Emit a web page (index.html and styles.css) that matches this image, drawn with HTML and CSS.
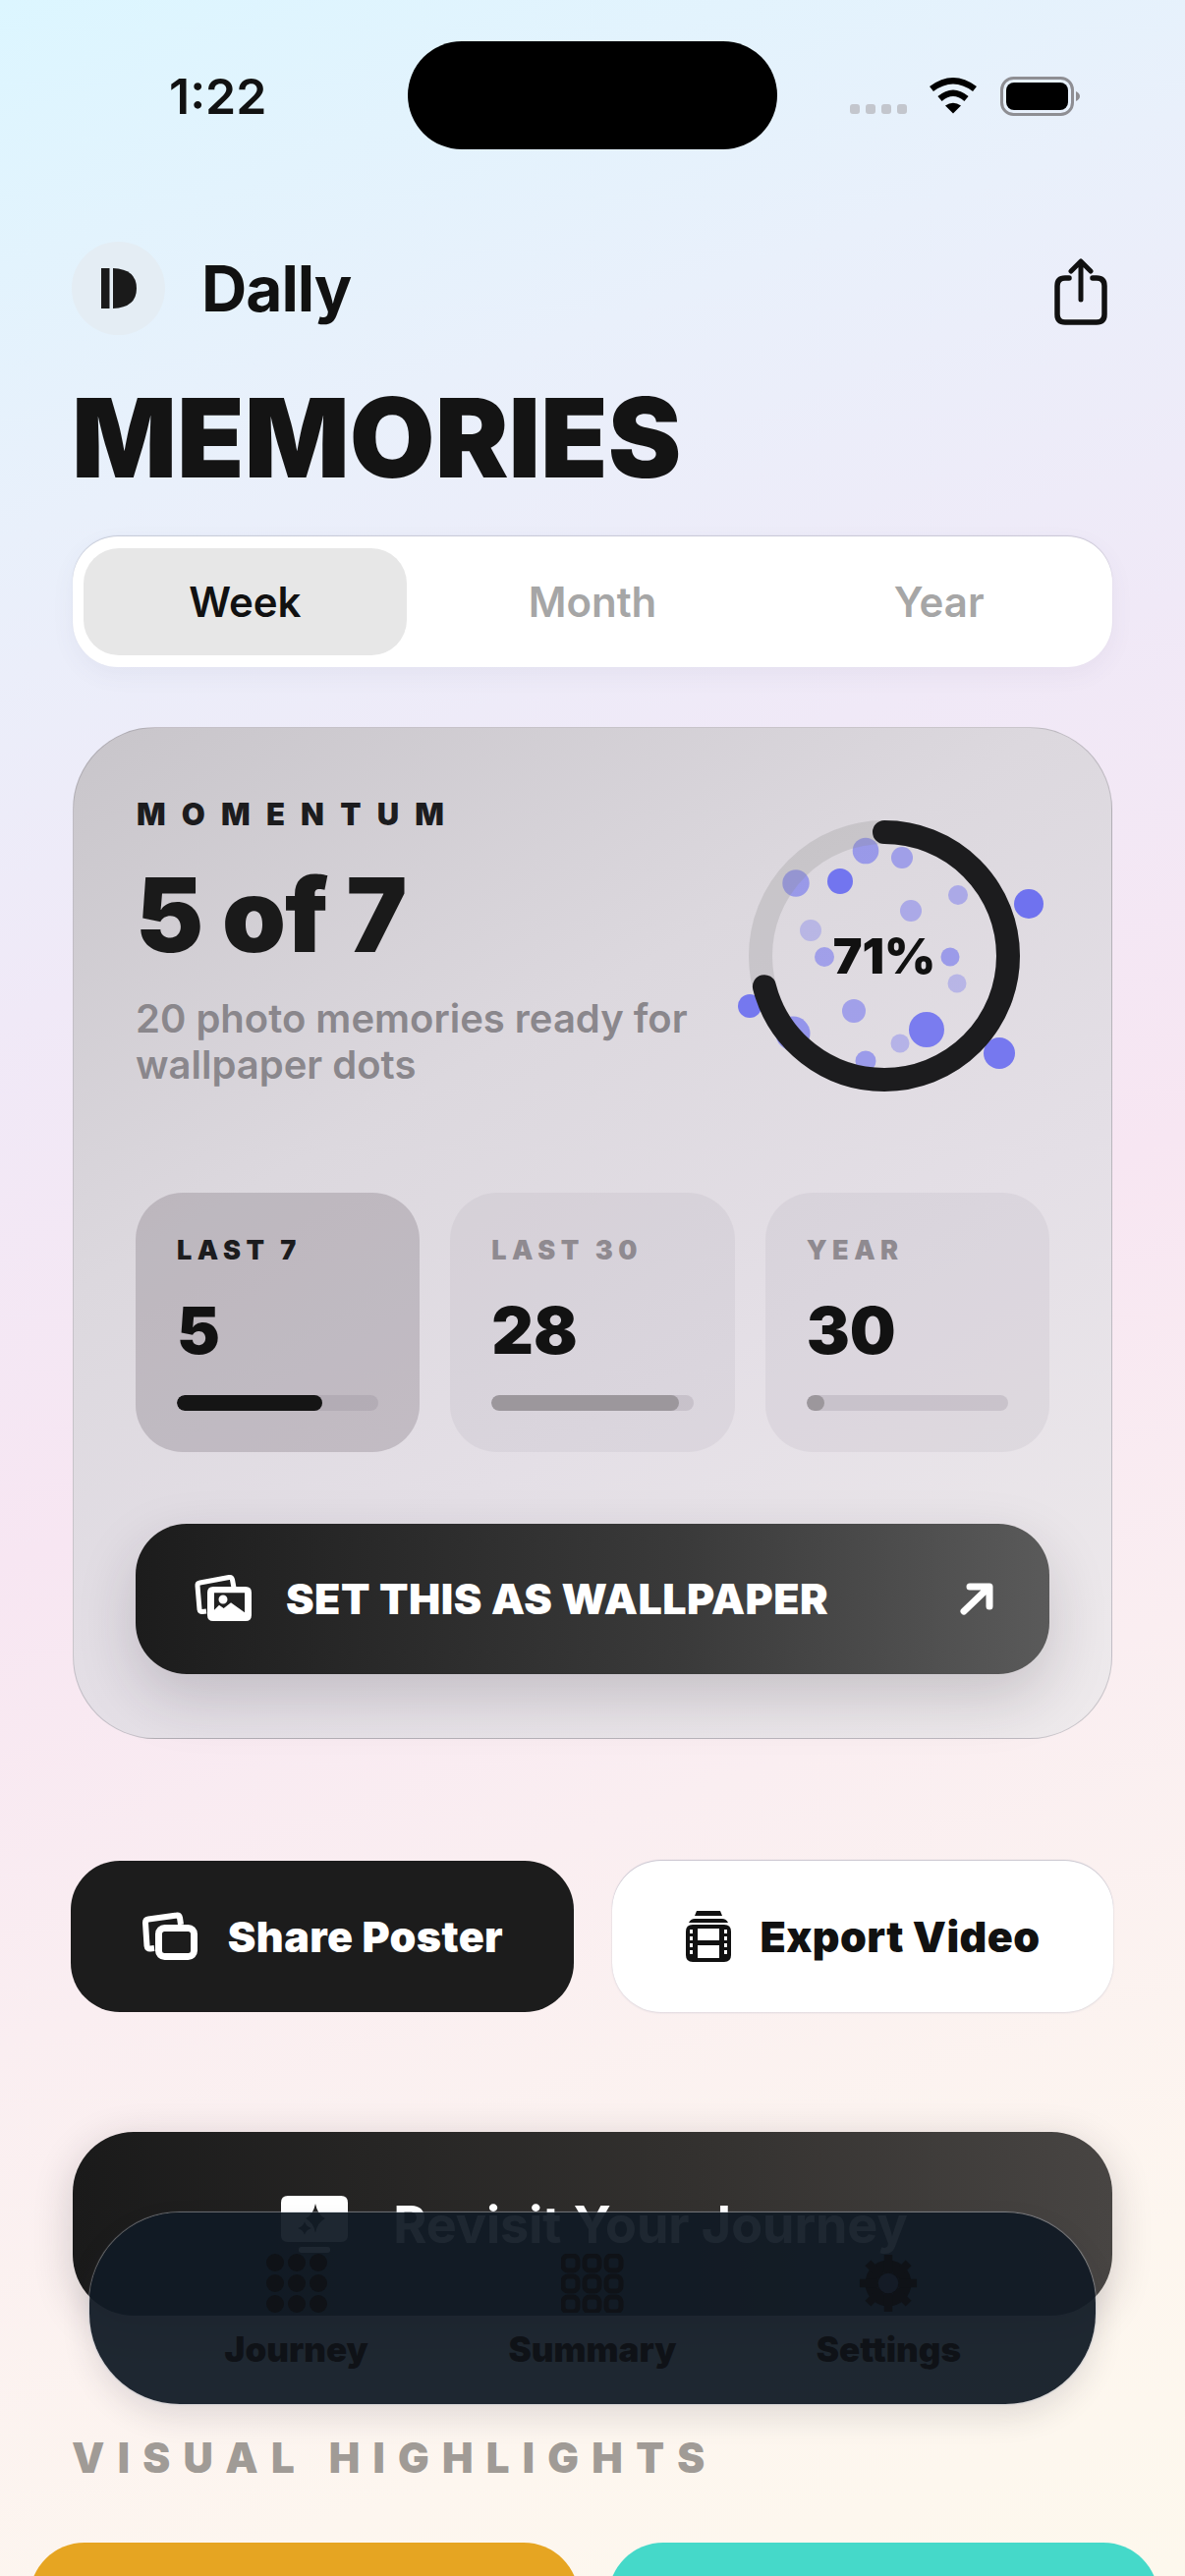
FILE: index.html
```html
<!DOCTYPE html>
<html lang="en">
<head>
  <meta charset="UTF-8" />
  <meta name="viewport" content="width=device-width, initial-scale=1.0" />
  <title>Dally Memories</title>
  <link rel="stylesheet" href="styles.css">
</head>
<body>
  <div id="screen">
    <div class="status">
      <span class="time">1:22</span>
      <div class="island"></div>
      <div class="status-icons">
        <div class="signal"><i></i><i></i><i></i><i></i></div>
        <svg class="wifi" viewBox="0 0 50 38">
          <path d="M3 12.5Q25 -4 47 12.5" fill="none" stroke="#000" stroke-width="6.5"/>
          <path d="M11.5 22.5Q25 11 38.500 22.500" fill="none" stroke="#000" stroke-width="6.500"/>
          <path d="M25 37.500L17 29.500Q25 24 33 29.500Z"/>
        </svg>
        <svg class="battery" viewBox="0 0 82 40">
          <rect x="1.500" y="1.500" width="72" height="37" rx="12" fill="none" stroke="#8e8e93" stroke-width="3"/>
          <rect x="6" y="6" width="63" height="28" rx="8"/>
          <path d="M77 15Q81 17 81 20Q81 23 77 25Z" fill="#8e8e93"/>
        </svg>
      </div>
    </div>

    <div class="brand-row">
      <div class="brand">
        <div class="logo">
          <svg viewBox="0 0 36 41" width="36" height="41">
            <rect x="0" y="0" width="8.500" height="41" fill="#1a1a1a"/>
            <path d="M12 0Q36 1 36 20.500Q36 40 12 41Z" fill="#1a1a1a"/>
          </svg>
        </div>
        <span class="brand-name">Dally</span>
      </div>
      <svg class="share" viewBox="0 0 54 68" width="54" height="68">
        <path d="M15 20H11Q3 20 3 28V57Q3 65 11 65H43Q51 65 51 57V28Q51 20 43 20H39" fill="none" stroke="#111" stroke-width="5.500" stroke-linecap="round"/>
        <path d="M27 42V4M17 13L27 3L37 13" fill="none" stroke="#111" stroke-width="5" stroke-linecap="round" stroke-linejoin="round"/>
      </svg>
    </div>

    <h1 class="title">MEMORIES</h1>

    <div class="segments">
      <div class="seg active">Week</div>
      <div class="seg">Month</div>
      <div class="seg">Year</div>
    </div>

    <div class="card">
      <div class="card-top">
        <div class="momentum">
          <div class="eyebrow">MOMENTUM</div>
          <div class="count">5 of 7</div>
          <p class="blurb">20 photo memories ready for wallpaper dots</p>
        </div>
        <div class="ring-wrap">
          <svg class="ring" viewBox="0 0 320 320" width="320" height="320">
            <g fill="#6366f1">
              <circle cx="141" cy="53" r="13.300" opacity=".55"/>
              <circle cx="178" cy="60" r="11" opacity=".5"/>
              <circle cx="70" cy="86" r="13.700" opacity=".55"/>
              <circle cx="115" cy="84" r="13" opacity=".88"/>
              <circle cx="307" cy="107" r="15" opacity=".9"/>
              <circle cx="235" cy="98" r="10" opacity=".42"/>
              <circle cx="187" cy="114" r="11" opacity=".42"/>
              <circle cx="85" cy="134" r="11" opacity=".3"/>
              <circle cx="99" cy="161" r="10" opacity=".5"/>
              <circle cx="227" cy="161" r="9.500" opacity=".55"/>
              <circle cx="234" cy="188" r="9.500" opacity=".32"/>
              <circle cx="23" cy="211" r="12" opacity=".85"/>
              <circle cx="129" cy="216" r="12" opacity=".5"/>
              <circle cx="67" cy="239" r="17.500" opacity=".6"/>
              <circle cx="203" cy="235" r="18" opacity=".82"/>
              <circle cx="176" cy="249" r="9.500" opacity=".35"/>
              <circle cx="141" cy="267" r="10.500" opacity=".55"/>
              <circle cx="277" cy="259" r="16" opacity=".85"/>
            </g>
            <circle cx="160" cy="160" r="126" fill="none" stroke="#8a8a8a" stroke-opacity=".25" stroke-width="24"/>
            <circle cx="160" cy="160" r="126" fill="none" stroke="#1c1c1e" stroke-width="24" stroke-linecap="round" stroke-dasharray="562 792" transform="rotate(-90 160 160)"/>
          </svg>
          <span class="ring-label">71%</span>
        </div>
      </div>

      <div class="tiles">
        <div class="tile selected">
          <div class="tile-label">LAST 7</div>
          <div class="tile-num">5</div>
          <div class="bar"><div class="bar-fill" style="width:72%"></div></div>
        </div>
        <div class="tile">
          <div class="tile-label">LAST 30</div>
          <div class="tile-num">28</div>
          <div class="bar"><div class="bar-fill" style="width:93%"></div></div>
        </div>
        <div class="tile">
          <div class="tile-label">YEAR</div>
          <div class="tile-num">30</div>
          <div class="bar"><div class="bar-fill" style="width:9%"></div></div>
        </div>
      </div>

      <div class="cta">
        <svg class="cta-icon" viewBox="0 0 60 50" width="60" height="50">
          <path d="M13 38L9 38.500Q6.500 39 6 36L4 12Q3.800 9.500 6.500 9L36 3.500Q39 3 39.500 6L41 14" fill="none" stroke="#fff" stroke-width="5" stroke-linejoin="round"/>
          <path fill-rule="evenodd" fill="#fff" d="M20 13H53Q59 13 59 19V42Q59 48 53 48H20Q14 48 14 42V19Q14 13 20 13ZM21 19.300V36.700L26 31.700L30.700 35L38 29.300L52 39.300V19.300ZM30 21.500A4.500 4.500 0 1 1 30 30.500A4.500 4.500 0 1 1 30 21.500Z"/>
        </svg>
        <span class="cta-text">SET THIS AS WALLPAPER</span>
        <svg class="cta-arrow" viewBox="0 0 34 34" width="34" height="34">
          <path d="M4 30L29 6M10 5H30V25" fill="none" stroke="#fff" stroke-width="7" stroke-linecap="round" stroke-linejoin="round"/>
        </svg>
      </div>
    </div>

    <div class="actions">
      <div class="action dark">
        <svg viewBox="0 0 58 50" width="58" height="50">
          <path d="M13 37L9 37.500Q6 38 5.500 34.500L4 11Q4 8 7 7.500L36 3.500Q38.500 3 39 6L40 13" fill="none" stroke="#fff" stroke-width="6" stroke-linejoin="round"/>
          <rect x="17.500" y="16.500" width="36" height="29" rx="6" fill="#1c1c1c" stroke="#fff" stroke-width="7"/>
        </svg>
        <span>Share Poster</span>
      </div>
      <div class="action light">
        <svg viewBox="0 0 46 52" width="46" height="52">
          <path d="M9 5L11 0H35L37 5Z" fill="#111"/>
          <path d="M3 12Q5 8 9 8H37Q41 8 43 12Z" fill="#111"/>
          <path fill-rule="evenodd" fill="#111" d="M7 14H39Q46 14 46 21V45Q46 52 39 52H7Q0 52 0 45V21Q0 14 7 14ZM12 18V30H34V18ZM12 35V48H34V35ZM4 19V23H7V19ZM4 26V30H7V26ZM4 33V37H7V33ZM4 40V44H7V40ZM39 19V23H42V19ZM39 26V30H42V26ZM39 33V37H42V33ZM39 40V44H42V40Z"/>
        </svg>
        <span>Export Video</span>
      </div>
    </div>

    <div class="revisit">
      <svg viewBox="0 0 68 58" width="68" height="58">
        <path fill-rule="evenodd" fill="#fff" d="M7 0H61Q68 0 68 7V40Q68 47 61 47H7Q0 47 0 40V7Q0 0 7 0ZM35 8Q37 19 45 23Q37 27 35 38Q33 27 25 23Q33 19 35 8ZM24 26Q25 31 31 33Q25 35 24 40Q23 35 17 33Q23 31 24 26Z"/>
        <rect x="18" y="52" width="32" height="6" rx="3" fill="#fff"/>
      </svg>
      <span>Revisit Your Journey</span>
    </div>

    <div class="section-label">VISUAL HIGHLIGHTS</div>

    <div class="highlights">
      <div class="highlight amber"></div>
      <div class="highlight teal"></div>
    </div>

    <nav class="tabbar">
      <div class="tab">
        <svg viewBox="0 0 64 60" width="64" height="60" fill="#0f1217">
          <circle cx="10" cy="9" r="9"/><circle cx="32" cy="9" r="9"/><circle cx="54" cy="9" r="9"/>
          <circle cx="10" cy="30" r="9"/><circle cx="32" cy="30" r="9"/><circle cx="54" cy="30" r="9"/>
          <circle cx="10" cy="51" r="9"/><circle cx="32" cy="51" r="9"/><circle cx="54" cy="51" r="9"/>
        </svg>
        <span>Journey</span>
      </div>
      <div class="tab">
        <svg viewBox="0 0 64 60" width="64" height="60" fill="none" stroke="#0f1217" stroke-width="5">
          <rect x="2" y="2" width="15" height="15" rx="5"/><rect x="24" y="2" width="15" height="15" rx="5"/><rect x="46" y="2" width="15" height="15" rx="5"/>
          <rect x="2" y="23" width="15" height="15" rx="5"/><rect x="24" y="23" width="15" height="15" rx="5"/><rect x="46" y="23" width="15" height="15" rx="5"/>
          <rect x="2" y="44" width="15" height="15" rx="5"/><rect x="24" y="44" width="15" height="15" rx="5"/><rect x="46" y="44" width="15" height="15" rx="5"/>
        </svg>
        <span>Summary</span>
      </div>
      <div class="tab">
        <svg viewBox="0 0 64 64" width="60" height="60">
          <circle cx="32" cy="32" r="19" fill="none" stroke="#0f1217" stroke-width="12"/>
          <path d="M32 1V63M1 32H63M10 10L54 54M10 54L54 10" stroke="#0f1217" stroke-width="9"/>
          <circle cx="32" cy="32" r="11" fill="#141b26"/>
        </svg>
        <span>Settings</span>
      </div>
    </nav>
  </div>
</body>
</html>
```

FILE: styles.css
```css
* {
  box-sizing: border-box;
}
html, body {
  margin: 0;
  height: 100%;
  overflow: hidden;
}
body {
  font-family: "Inter", "Liberation Sans", sans-serif;
  color: #111;
}
#screen {
  position: relative;
  height: 2622px;
  overflow: hidden;
  padding: 0 74px;
  background: linear-gradient(160deg, #dcf6ff 0%, #e9f0fb 18%, #f0e9f7 34%, #f7e6f2 52%, #faeef1 68%, #fdf6ef 88%, #fdf8ed 100%);
}

/* status bar */
.status {
  display: flex;
  align-items: flex-start;
  height: 245px;
  padding-top: 42px;
  margin: 0 -74px;
}
.time {
  width: 415px;
  padding: 35px 0 0 172px;
  font-size: 50px;
  line-height: 42px;
  font-weight: 600;
  color: #111;
}
.island {
  width: 376px;
  height: 110px;
  border-radius: 55px;
  background: #000;
}
.status-icons {
  display: flex;
  align-items: flex-start;
  padding: 36px 0 0 74px;
}
.signal {
  display: flex;
  gap: 6px;
  margin-top: 28px;
  margin-right: 22px;
}
.signal i {
  width: 10px;
  height: 10px;
  border-radius: 3px;
  background: #c3c6cd;
}
.wifi {
  width: 50px;
  height: 38px;
  margin-right: 23px;
}
.battery {
  width: 82px;
  height: 40px;
}

/* header */
.brand-row {
  display: flex;
  justify-content: space-between;
  align-items: center;
  height: 96px;
}
.brand {
  display: flex;
  align-items: center;
  gap: 37px;
  margin-left: -1px;
}
.logo {
  width: 95px;
  height: 95px;
  border-radius: 50%;
  background: #e4edf4;
  display: flex;
  align-items: center;
  justify-content: center;
}
.brand-name {
  font-size: 64px;
  font-weight: 700;
  letter-spacing: -1px;
}
.share {
  margin: 8px 5px 0 0;
}
.title {
  margin: 48px 0 0 -1px;
  font-size: 112px;
  line-height: 112px;
  font-weight: 900;
  color: #141414;
  letter-spacing: 0;
}
.segments {
  display: grid;
  grid-template-columns: repeat(3, 1fr);
  height: 133px;
  margin-top: 45px;
  padding: 12px 0;
  background: #fff;
  border-radius: 46px;
  box-shadow: 0 -1px 1px rgba(90, 90, 110, 0.25), 0 8px 24px rgba(90, 80, 120, 0.06);
}
.seg {
  display: flex;
  align-items: center;
  justify-content: center;
  font-size: 42px;
  font-weight: 600;
  color: #a6a6a6;
}
.seg.active {
  margin: 0 13px 0 11px;
  background: #e7e7e7;
  border-radius: 36px;
  color: #111;
}

/* momentum card */
.card {
  margin-top: 61px;
  height: 1030px;
  padding: 65px 63px;
  border-radius: 84px;
  border: 1px solid rgba(120, 115, 125, 0.3);
  background: linear-gradient(150deg, #c8c5ca 0%, #dcd8de 35%, #e4dfe6 62%, #eeeaec 100%);
  display: flex;
  flex-direction: column;
}
.card-top {
  display: flex;
  justify-content: space-between;
  height: 410px;
}
.eyebrow {
  margin: 5px 0 0 1px;
  font-size: 31px;
  line-height: 36px;
  font-weight: 900;
  letter-spacing: 16.200px;
  color: #1c1c1e;
}
.count {
  margin-top: 30px;
  font-size: 104px;
  line-height: 108px;
  font-weight: 900;
  color: #1a1a1a;
  letter-spacing: -1px;
}
.blurb {
  margin: 28px 0 0 0;
  width: 580px;
  font-size: 40px;
  line-height: 47px;
  font-weight: 600;
  color: #8a878c;
}
.ring-wrap {
  position: relative;
  width: 320px;
  height: 320px;
  margin: 7px 8px 0 0;
}
.ring {
  display: block;
  overflow: visible;
}
.ring-label {
  position: absolute;
  top: 133px;
  left: 80px;
  width: 160px;
  text-align: center;
  font-size: 50px;
  line-height: 54px;
  font-weight: 900;
  color: #111;
}
.tiles {
  display: grid;
  grid-template-columns: repeat(3, 1fr);
  gap: 31px;
}
.tile {
  height: 264px;
  padding: 44px 42px 0 42px;
  border-radius: 48px;
  background: rgba(170, 160, 175, 0.16);
}
.tile.selected {
  background: rgba(120, 110, 120, 0.3);
}
.tile-label {
  font-size: 27px;
  line-height: 30px;
  font-weight: 900;
  letter-spacing: 5.500px;
  color: #8f8a90;
}
.selected .tile-label {
  color: #1c1c1e;
}
.tile-num {
  margin-top: 26px;
  font-size: 66px;
  line-height: 80px;
  font-weight: 900;
  color: #121212;
}
.bar {
  margin-top: 26px;
  height: 16px;
  border-radius: 8px;
  overflow: hidden;
  background: rgba(130, 125, 135, 0.22);
}
.bar-fill {
  height: 100%;
  border-radius: 8px;
  background: #9c979c;
}
.selected .bar-fill {
  background: #151515;
}
.cta {
  margin-top: 73px;
  height: 154px;
  padding: 0 57px 0 59px;
  border-radius: 52px;
  background: linear-gradient(90deg, #1c1c1c 0%, #3a3a3a 60%, #5a5a5a 100%);
  box-shadow: 0 24px 60px rgba(40, 35, 45, 0.18);
  display: flex;
  align-items: center;
  color: #fff;
}
.cta-text {
  flex: 1;
  margin-left: 34px;
  font-size: 43px;
  font-weight: 900;
  letter-spacing: 0.480px;
}

/* action buttons */
.actions {
  display: grid;
  grid-template-columns: 512px 510px;
  justify-content: space-between;
  margin: 124px -1px 0 -2px;
}
.action {
  height: 154px;
  border-radius: 50px;
  display: flex;
  align-items: center;
  justify-content: center;
  gap: 30px;
  font-size: 43px;
  font-weight: 900;
  letter-spacing: 0.400px;
}
.action.dark {
  background: #1c1c1c;
  color: #fff;
}
.action.light {
  background: #fff;
  color: #111;
  box-shadow: 0 -1px 1px rgba(110, 120, 150, 0.35), 0 1px 2px rgba(110, 120, 150, 0.2);
}
.revisit {
  margin-top: 122px;
  height: 187px;
  padding: 65px 0 0 4px;
  border-radius: 62px;
  background: linear-gradient(90deg, #1a1a1a 0%, #33312f 60%, #484543 100%);
  box-shadow: 0 10px 40px rgba(40, 35, 45, 0.2);
  display: flex;
  align-items: flex-start;
  justify-content: center;
  gap: 46px;
  color: #fff;
  font-size: 52px;
  line-height: 60px;
  font-weight: 700;
}
.section-label {
  margin: 124px 0 0 -1px;
  font-size: 42px;
  line-height: 42px;
  font-weight: 900;
  letter-spacing: 13.300px;
  color: #a09b96;
}
.highlights {
  display: grid;
  grid-template-columns: 559px 560px;
  justify-content: space-between;
  margin: 65px -47px 0 -44px;
}
.highlight {
  height: 200px;
  border-radius: 56px;
}
.amber {
  background: #e6a522;
}
.teal {
  background: #45d9c9;
}

/* floating tab bar */
.tabbar {
  position: absolute;
  left: 91px;
  top: 2252px;
  width: 1024px;
  height: 195px;
  padding: 0 60px;
  border-radius: 92px;
  background: rgba(17, 26, 37, 0.946);
  box-shadow: 0 0 1px 1px rgba(190, 195, 205, 0.5), 0 14px 30px rgba(40, 40, 60, 0.12);
  display: grid;
  grid-template-columns: repeat(3, 1fr);
}
.tab {
  display: flex;
  flex-direction: column;
  align-items: center;
  gap: 17px;
  padding-top: 42px;
  font-size: 35px;
  line-height: 40px;
  font-weight: 900;
  color: #0f1217;
}
```
